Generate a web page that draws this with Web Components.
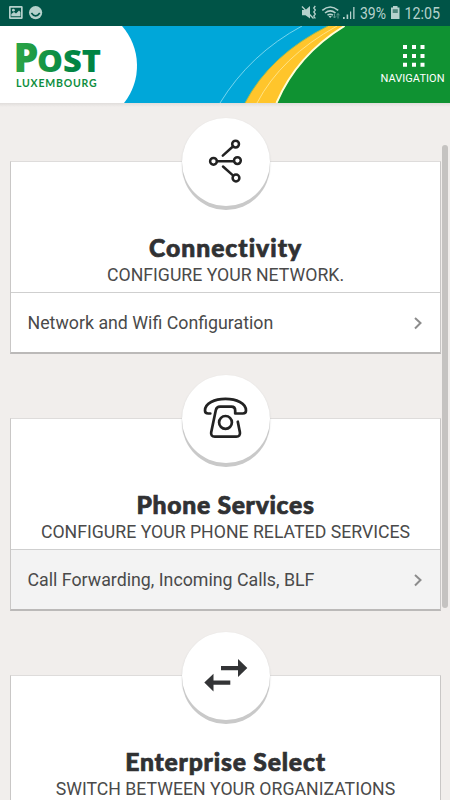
<!DOCTYPE html>
<html lang="en">
<head>
<meta charset="utf-8">
<meta name="viewport" content="width=device-width, initial-scale=1">
<title>POST Luxembourg</title>
<style>
    html, body {
        margin: 0;
        height: 100%;
        overflow: hidden;
        background: #f1eeec;
        font-family: Roboto, "Liberation Sans", sans-serif;
        color: #444;
    }
</style>
</head>
<body>
<post-app>
    <status-bar slot="status"></status-bar>
    <post-header slot="header"></post-header>
    <service-card heading="Connectivity" spacing="1px">
        <post-icon slot="icon" name="network"></post-icon>
        <span slot="subtitle">CONFIGURE YOUR NETWORK.</span>
        <service-link>Network and Wifi Configuration</service-link>
    </service-card>
    <service-card heading="Phone Services" spacing="0.7px">
        <post-icon slot="icon" name="phone"></post-icon>
        <span slot="subtitle">CONFIGURE YOUR PHONE RELATED SERVICES</span>
        <service-link active>Call Forwarding, Incoming Calls, BLF</service-link>
    </service-card>
    <service-card heading="Enterprise Select" spacing="0.8px">
        <post-icon slot="icon" name="switch"></post-icon>
        <span slot="subtitle">SWITCH BETWEEN YOUR ORGANIZATIONS</span>
    </service-card>
</post-app>

<script>
const icons = {
    network: `
        <g fill="none" stroke="#222" stroke-width="2.5" stroke-linecap="round">
            <circle cx="13.5" cy="25.3" r="3.4"/>
            <circle cx="37.4" cy="24.6" r="3.4"/>
            <circle cx="35.6" cy="8.1" r="3.4"/>
            <circle cx="36" cy="42" r="3.4"/>
            <path d="M17 25.3H34M22.8 19.6L32.9 10.5M23 30.5L33.2 39.6"/>
        </g>`,
    phone: `
        <g transform="translate(0 -2.3)" fill="none" stroke="#222" stroke-width="2.7" stroke-linecap="round" stroke-linejoin="round">
            <path d="M10.3 22.8H8.2C6.3 22.8 5 21.5 5 19.8C5 12.5 14.5 8.2 25.5 8.2C36.5 8.2 46 12.5 46 19.8C46 21.5 44.7 22.8 42.8 22.8H35.2V20C35.2 17.6 33.6 16 31.3 16H20C17.7 16 16.3 17.3 15.8 19.5L11.2 41.5C10.7 44.3 12 46 14.7 46H36.3C39 46 40.4 44.3 39.9 41.5L37.8 31"/>
            <circle cx="25.5" cy="31.7" r="6.4"/>
        </g>`,
    switch: `
        <path fill="#333436" d="M21 16H38V9L47.3 18.1L38 27V20.2H21ZM30.3 30.5H13.5V23.7L4.3 32.6L13.5 41.5V34.7H30.3Z"/>`,
};

class PostApp extends HTMLElement {
    constructor() {
        super();
        this.attachShadow({ mode: 'open' });
        this.shadowRoot.innerHTML = `
            <style>
                :host {
                    display: flex;
                    flex-direction: column;
                    position: relative;
                    height: 800px;
                    width: 450px;
                    overflow: hidden;
                }
                main {
                    flex: 1;
                    min-height: 0;
                    overflow: hidden;
                    display: flex;
                    flex-direction: column;
                    gap: 21px;
                    padding: 15px 9px 0 10px;
                    background: linear-gradient(#e0dddb, #f1eeec 4px);
                }
                .thumb {
                    position: absolute;
                    right: 2px;
                    top: 145px;
                    width: 6px;
                    height: 463px;
                    border-radius: 3px;
                    background: #c5c3c1;
                }
            </style>
            <slot name="status"></slot>
            <slot name="header"></slot>
            <main><slot></slot></main>
            <div class="thumb"></div>
        `;
    }
}

class StatusBar extends HTMLElement {
    constructor() {
        super();
        this.attachShadow({ mode: 'open' });
        this.shadowRoot.innerHTML = `
            <style>
                :host {
                    display: block;
                    flex: none;
                    height: 26px;
                    background: #005447;
                }
                svg { display: block; }
                text { font: 16px Roboto, sans-serif; }
            </style>
            <svg width="450" height="26" fill="#b5d1cc">
                <path fill-rule="evenodd" d="M10 6H21.5Q22.7 6 22.7 7.2V17.8Q22.7 19 21.5 19H10.2Q9 19 9 17.8V7.2Q9 6 10 6ZM10.7 7.7V17.3H21V7.7Z"/>
                <path d="M11.3 16.2V14L14 12L16 13.5L19 10.5L20.4 12V16.2Z"/>
                <circle cx="13.4" cy="10.2" r="1.4"/>
                <circle cx="35.6" cy="12.6" r="6.6"/>
                <path fill="none" stroke="#005447" stroke-width="1.7" d="M31.4 13Q35.6 18.8 39.8 13"/>
                <!-- muted speaker with vibration -->
                <path d="M302 10H305.5L310 6V18.5L305.5 15.2H302Z"/>
                <path fill="none" stroke="#b5d1cc" stroke-width="1.3" d="M302 6.5L313.5 18.5M315.3 6L313.8 8L315.3 10L313.8 12L315.3 14L313.8 16L315.3 18.5"/>
                <!-- wifi -->
                <g fill="none" stroke="#b5d1cc" stroke-width="1.6">
                    <path d="M322.3 10.3Q330.2 3.7 338.2 10.3M325 13Q330.2 8.7 335.5 13M327.5 15.2Q330.2 13.2 333 15.2"/>
                </g>
                <path d="M328.6 16.2Q330.2 15.2 331.8 16.2L330.2 18Z"/>
                <path fill="none" stroke="#5d978c" d="M334.5 13.5V18M332.8 16.2L334.5 18L336.2 16.2M338 18.5V13.5M336.5 15.3L338 13.5L339.5 15.3"/>
                <path d="M343 17H344.7V19H343ZM346.6 14.5H348.2V19H346.6ZM350 11.5H351.2V19H350ZM353.2 7H354.5V19H353.2Z"/>
                <text x="360" y="19" textLength="26" lengthAdjust="spacingAndGlyphs">39%</text>
                <path d="M393 6H397.5V7.5H399.5V19H391V7.5H393Z"/>
                <path fill="#4f877d" d="M392.7 9.2H397.8V13H392.7Z"/>
                <text x="404.5" y="19" textLength="35.5" lengthAdjust="spacingAndGlyphs">12:05</text>
            </svg>
        `;
    }
}

class PostHeader extends HTMLElement {
    constructor() {
        super();
        this.attachShadow({ mode: 'open' });
        this.shadowRoot.innerHTML = `
            <style>
                :host {
                    display: block;
                    flex: none;
                    height: 77px;
                }
                svg { display: block; }
                .logo { font-family: "Open Sans", sans-serif; font-weight: 800; }
                .city { font: 700 10.5px Lato, sans-serif; }
                .nav { font: 11px Roboto, sans-serif; }
            </style>
            <svg width="450" height="77">
                <defs>
                    <linearGradient id="leaf" gradientUnits="userSpaceOnUse" x1="17" y1="0" x2="101" y2="0">
                        <stop offset="0" stop-color="#2ba446"/>
                        <stop offset=".7" stop-color="#008444"/>
                    </linearGradient>
                </defs>
                <rect width="450" height="77" fill="#00a7d9"/>
                <path fill="#0f9232" d="M277 77Q297 29 345 0H450V77Z"/>
                <path fill="#ffc52b" d="M245 77Q270 29 328 0H345Q297 29 277 77Z"/>
                <g fill="none">
                    <path stroke="#ffffd8" stroke-width="2" d="M276.5 77Q297 29 344.5 0"/>
                    <path stroke="#ffe58e" stroke-width=".9" d="M257 77Q281 31 337 0"/>
                    <path stroke="#83d9ee" stroke-width=".9" d="M220 77Q250 28 302 0"/>
                    <path stroke="#a2b94e" stroke-width="1" d="M245 77Q270 29 328 0"/>
                </g>
                <path fill="#fff" d="M0 0H122A60 60 0 0 1 124 77H0Z"/>
                <g class="logo" fill="url(#leaf)">
                    <text x="13.5" y="46" font-size="41.5" textLength="25" lengthAdjust="spacingAndGlyphs">P</text>
                    <text x="37" y="46" font-size="30" textLength="64" lengthAdjust="spacingAndGlyphs">OST</text>
                </g>
                <text class="city" fill="#0e8e40" x="16" y="60.5" textLength="80.5">LUXEMBOURG</text>
                <path fill="#fff" d="M403 19h4v4h-4zm9 0h4v4h-4zm8.5 0h4v4h-4zM403 28h4v4h-4zm9 0h4v4h-4zm8.5 0h4v4h-4zM403 36.7h4v4h-4zm9 0h4v4h-4zm8.5 0h4v4h-4z"/>
                <text class="nav" fill="#fff" x="380.5" y="55.8" textLength="64">NAVIGATION</text>
            </svg>
        `;
    }
}

class PostIcon extends HTMLElement {
    constructor() {
        super();
        this.attachShadow({ mode: 'open' });
    }

    connectedCallback() {
        this.shadowRoot.innerHTML = `
            <style>
                :host { display: block; }
                svg { display: block; }
            </style>
            <svg width="52" height="52" viewBox="0 0 52 52">${icons[this.getAttribute('name')]}</svg>
        `;
    }
}

class ServiceCard extends HTMLElement {
    constructor() {
        super();
        this.attachShadow({ mode: 'open' });
    }

    connectedCallback() {
        this.shadowRoot.innerHTML = `
            <style>
                :host {
                    display: flex;
                    flex-direction: column;
                    align-items: center;
                    flex: none;
                    height: 236px;
                }
                .circle {
                    display: flex;
                    align-items: center;
                    justify-content: center;
                    flex: none;
                    width: 88px;
                    height: 88px;
                    margin-bottom: -45px;
                    border-radius: 50%;
                    background: #fff;
                    box-shadow: 0 4px 0 #c9c9c9, 0 1px 2px #ccc;
                    z-index: 1;
                }
                .card {
                    box-sizing: border-box;
                    width: 100%;
                    height: 193px;
                    display: flex;
                    flex-direction: column;
                    background: #fff;
                    border: 1px solid #c9c7c6;
                    border-top-color: #dedcdb;
                    border-bottom: 2px solid #bbb9b8;
                }
                .title {
                    display: flex;
                    flex-direction: column;
                    align-items: center;
                    height: 59px;
                    padding: 71px 0 0;
                }
                h2 {
                    margin: 0;
                    font: 900 24.7px/30px Lato, sans-serif;
                    letter-spacing: ${this.getAttribute('spacing') || '0'};
                    -webkit-text-stroke: 0.7px #303133;
                    color: #303133;
                    white-space: nowrap;
                }
                .sub {
                    font-size: 17.7px;
                    line-height: 25px;
                    white-space: nowrap;
                    color: #4a4a4a;
                }
            </style>
            <div class="circle"><slot name="icon"></slot></div>
            <div class="card">
                <div class="title">
                    <h2>${this.getAttribute('heading')}</h2>
                    <div class="sub"><slot name="subtitle"></slot></div>
                </div>
                <slot></slot>
            </div>
        `;
    }
}

class ServiceLink extends HTMLElement {
    constructor() {
        super();
        this.attachShadow({ mode: 'open' });
        this.shadowRoot.innerHTML = `
            <style>
                :host {
                    box-sizing: border-box;
                    display: flex;
                    align-items: center;
                    justify-content: space-between;
                    height: 60px;
                    padding: 0 17px 0 16.5px;
                    border-top: 1px solid #cfcfcf;
                    font-size: 17.8px;
                    color: #4a4a4a;
                }
                :host([active]) { background: #f3f3f3; }
            </style>
            <span><slot></slot></span>
            <svg width="10" height="14" fill="none" stroke="#8c8c8c" stroke-width="2"><path d="M2 2L7.5 7L2 12.5"/></svg>
        `;
    }
}

customElements.define('post-app', PostApp);
customElements.define('status-bar', StatusBar);
customElements.define('post-header', PostHeader);
customElements.define('post-icon', PostIcon);
customElements.define('service-card', ServiceCard);
customElements.define('service-link', ServiceLink);
</script>
</body>
</html>
